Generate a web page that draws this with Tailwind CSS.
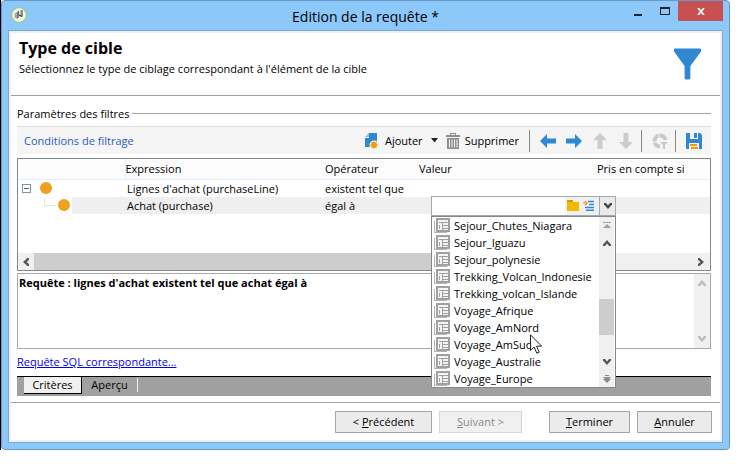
<!DOCTYPE html>
<html lang="fr">
<head>
<meta charset="utf-8">
<title>Edition de la requête</title>
<script src="https://cdn.jsdelivr.net/npm/@tailwindcss/browser@4"></script>
</head>
<body class="bg-white font-['Open_Sans','Noto_Sans',sans-serif] text-[11px] leading-[17px] text-black">
<svg class="hidden">
  <symbol id="doc" viewBox="0 0 16 16"><path d="M0 4h1v11h12v1H0z" fill="#b4b4b4"/><rect x="3" y="2" width="12" height="12" fill="#f4f4f4" stroke="#a0a0a0" stroke-width="2"/><path d="M5 5.500h9M5.500 8v4M8.500 5v8M9 8.500h5M9 11.500h5" stroke="#a0a0a0" fill="none"/></symbol>
  <symbol id="chev" viewBox="0 0 8 6"><path d="M0 0h2l2 2.500L6 0h2v1.500L4 6 0 1.500z" fill="currentColor"/></symbol>
  <symbol id="arrow" viewBox="0 0 16 16"><path d="M0 8 7 1v4.500h9v5H7V15z" fill="currentColor"/></symbol>
</svg>
<div class="h-screen pr-[13px] pb-[17px]">
<div class="relative flex h-full border-l border-black">
<div class="flex min-w-0 flex-1 flex-col rounded-[4px] border border-[#6698c8] bg-[#8dc8fb] px-[6px] pb-[6px]">
  <header class="relative flex h-[29px] shrink-0 items-center justify-center">
    <svg class="absolute left-[3px] top-[6px] size-4" viewBox="0 0 16 16"><circle cx="8" cy="8" r="7.400" fill="#f2f4ef" stroke="#9bc754"/><path d="M3.500 6.500 6 5v7L3.500 10.800z" fill="#aaa"/><path d="m6 5 2-1.500V10l-2 2z" fill="#777"/><path d="M8.500 4.500 10 3v6l-1.500 1z" fill="#bbb"/><path d="M11 3v6.500L8 8" stroke="#222" fill="none"/></svg>
    <h1 class="pt-[2px] text-[14px]">Edition de la requête *</h1>
    <div class="absolute right-0 top-0 flex h-5">
      <button aria-label="Réduire" class="flex w-[27px] items-center justify-center"><span class="mt-[7px] h-[2px] w-2 bg-[#222]"></span></button>
      <button aria-label="Agrandir" class="flex w-[27px] items-center justify-center"><span class="h-2 w-[10px] border border-t-2 border-[#222]"></span></button>
      <button aria-label="Fermer" class="flex w-[45px] items-center justify-center bg-[#c75050]"><svg class="h-[7px] w-2" viewBox="0 0 8 7"><path d="m1 0 6 7M7 0 1 7" stroke="#fff" stroke-width="1.800"/></svg></button>
    </div>
  </header>
  <div class="flex min-h-0 flex-1 flex-col border border-[#7aa9d8] bg-white">
  <div class="flex min-h-0 flex-1 flex-col border-2 border-[#f0f0f0]">
    <section class="flex h-[63px] shrink-0 items-start justify-between border-b border-[#a0a0a0] pl-2 pr-[19px]">
      <div>
        <h2 class="pt-[5px] text-[16px] font-bold leading-[20px]">Type de cible</h2>
        <p class="pt-[2px]">Sélectionnez le type de ciblage correspondant à l'élément de la cible</p>
      </div>
      <svg class="mt-[15px] h-8 w-[27px]" viewBox="0 0 28 32"><path d="M1 0h26q1 0 1 1v2L17 18v13l-1 1h-4l-1-1V18L0 3V1q0-1 1-1z" fill="#3087d2"/></svg>
    </section>
    <main class="flex min-h-0 flex-1 flex-col pl-[6px] pr-[9px]">
      <h3 class="flex items-center gap-[2px] pt-[9px]">Paramètres des filtres<span class="h-px flex-1 bg-[#a0a0a0]"></span></h3>
      <div class="mt-1 flex h-7 shrink-0 items-center border-t border-[#ddd] bg-[#f5f5f5] pl-[7px] pr-[9px]">
        <span class="flex-1 text-[#2a5bc0]">Conditions de filtrage</span>
        <button class="flex items-center gap-[6px]"><svg class="h-4 w-[14px]" viewBox="0 0 14 16"><path d="M4 0h8v8l-3 6H0V5h4z" fill="#3087d2"/><path d="M0 4 4 0v4z" fill="#8abaf0"/><circle cx="9" cy="12" r="4.500" fill="#f5f5f5"/><path d="M9 7.500v9M4.500 12h9M6 9l6 6M12 9l-6 6" stroke="#f0a020" stroke-width=".8"/><circle cx="9" cy="12" r="2.900" fill="#f09a10"/></svg>Ajouter</button>
        <button aria-label="Options d'ajout" class="px-2"><svg class="h-[5px] w-[7px]" viewBox="0 0 7 5"><path d="M0 0h7L3.500 4.500z" fill="#222"/></svg></button>
        <button class="flex items-center gap-[5px]"><svg class="h-4 w-[14px]" viewBox="0 0 14 16"><path d="M0 2h4V0h6v2h4v2H0zM1 5h12v11H1z" fill="#8e8e8e"/><path d="M5 1.500h4M3.500 6.500v8M6 6.500v8M8.500 6.500v8M11 6.500v8" stroke="#f5f5f5"/></svg>Supprimer</button>
        <span class="ml-[10px] mr-[10px] h-[22px] w-px bg-[#888]"></span>
        <div class="flex items-center gap-[10px]">
          <button aria-label="Gauche" class="text-[#3087d2]"><svg class="size-4"><use href="#arrow"/></svg></button>
          <button aria-label="Droite" class="text-[#3087d2]"><svg class="size-4 rotate-180"><use href="#arrow"/></svg></button>
          <button aria-label="Monter" class="text-[#ccc]" disabled><svg class="size-4 rotate-90"><use href="#arrow"/></svg></button>
          <button aria-label="Descendre" class="text-[#ccc]" disabled><svg class="size-4 -rotate-90"><use href="#arrow"/></svg></button>
        </div>
        <span class="ml-[7px] mr-[10px] h-[22px] w-px bg-[#888]"></span>
        <button aria-label="Actualiser" disabled><svg class="size-4" viewBox="0 0 16 16"><path d="M13.500 7A5.500 5.500 0 1 0 8 13.500" stroke="#c8c8c8" stroke-width="4" fill="none"/><path d="M7 0v5M0 9h5" stroke="#f5f5f5"/><path d="M8 9h8l-3 3v4h-2v-4z" fill="#c8c8c8"/></svg></button>
        <span class="ml-[7px] mr-[10px] h-[22px] w-px bg-[#888]"></span>
        <button aria-label="Enregistrer"><svg class="size-4" viewBox="0 0 16 16"><path d="M0 0h14l2 2v14H0z" fill="#3087d2"/><path d="M4 0h8v6H4zM3 10h10v6H3z" fill="#f5f5f5"/><path d="M8 0h3v5H8z" fill="#3087d2"/><path d="M4 11h7v2H4zM5 14h7v2H5z" fill="#f09a10"/></svg></button>
      </div>
      <div class="mt-1 flex h-[113px] shrink-0 flex-col border border-[#828790]">
        <table class="w-full table-fixed border-collapse text-left">
          <colgroup><col class="w-[107px]"><col class="w-[200px]"><col class="w-[94px]"><col class="w-[178px]"><col></colgroup>
          <thead><tr class="h-[20px] border-b border-[#e3eefa] bg-[#fcfcfc] *:p-0 *:font-normal"><th aria-label="Arborescence" class="border-r border-[#e3eefa]"></th><th>Expression</th><th>Opérateur</th><th>Valeur</th><th>Pris en compte si</th></tr></thead>
          <tbody>
            <tr class="h-[17px] *:p-0">
              <td><div class="flex items-center gap-[9px] pl-1"><button aria-label="Replier" class="flex size-[9px] items-center justify-center border border-[#919191]"><span class="h-px w-[5px] bg-[#3a5a9a]"></span></button><span class="size-3 rounded-full bg-[#f0a020]"></span></div></td>
              <td><span class="pl-[2px]">Lignes d'achat (purchaseLine)</span></td><td>existent tel que</td><td></td><td></td>
            </tr>
            <tr class="h-[17px] *:bg-[#efefef] *:p-0">
              <td><div class="flex h-[17px] items-center bg-white pl-[26px]"><span class="mb-[8px] h-[9px] w-3 border-b border-l border-[#e4e4e4]"></span><span class="ml-[2px] size-3 rounded-full bg-[#f0a020]"></span><span class="ml-[2px] h-full flex-1 bg-[#efefef]"></span></div></td>
              <td><span class="pl-[2px]">Achat (purchase)</span></td><td>égal à</td>
              <td class="relative">
                <div class="absolute left-[12px] top-[-1px] z-10 w-[185px]">
                  <div class="flex h-5 border border-[#a5a8ad] bg-white">
                    <input aria-label="Valeur" class="min-w-0 flex-1 px-1 outline-none">
                    <button aria-label="Ouvrir" class="flex w-[16px] items-center justify-center bg-[#f0f0f0]"><svg class="h-[11px] w-3" viewBox="0 0 12 11"><path d="M0 0h5l1 2h6v9H0z" fill="#f0b800"/><path d="M0 0h6v2H0z" fill="#ec9000"/></svg></button>
                    <button aria-label="Editer l'expression" class="flex w-[18px] items-center pl-[2px] bg-[#f0f0f0]"><svg class="h-[11px] w-[11px]" viewBox="0 0 11 11"><path d="M5 1.500h6M6 4.500h5M2 7.500h9M3 10.200h8" stroke="#3087d2" stroke-width="1.500"/><path d="M0 3h4M2 1l2 2-2 2" stroke="#f09a10" stroke-width="1.200" fill="none"/></svg></button>
                    <button aria-label="Afficher la liste" class="flex w-4 items-center justify-center border-l border-[#a5a8ad] bg-[#eaeaea] text-[#444]"><svg class="h-[6px] w-2"><use href="#chev"/></svg></button>
                  </div>
                  <div class="flex border border-[#828790] bg-white">
                    <ul role="listbox" aria-label="Valeurs" class="min-w-0 flex-1 whitespace-nowrap *:flex *:h-[17px] *:items-center *:gap-1 *:pl-[2px]">
                      <li role="option"><svg class="size-4 shrink-0"><use href="#doc"/></svg>Sejour_Chutes_Niagara</li>
                      <li role="option"><svg class="size-4 shrink-0"><use href="#doc"/></svg>Sejour_Iguazu</li>
                      <li role="option"><svg class="size-4 shrink-0"><use href="#doc"/></svg>Sejour_polynesie</li>
                      <li role="option"><svg class="size-4 shrink-0"><use href="#doc"/></svg>Trekking_Volcan_Indonesie</li>
                      <li role="option"><svg class="size-4 shrink-0"><use href="#doc"/></svg>Trekking_volcan_Islande</li>
                      <li role="option"><svg class="size-4 shrink-0"><use href="#doc"/></svg>Voyage_Afrique</li>
                      <li role="option"><svg class="size-4 shrink-0"><use href="#doc"/></svg>Voyage_AmNord</li>
                      <li role="option"><svg class="size-4 shrink-0"><use href="#doc"/></svg>Voyage_AmSud</li>
                      <li role="option"><svg class="size-4 shrink-0"><use href="#doc"/></svg>Voyage_Australie</li>
                      <li role="option"><svg class="size-4 shrink-0"><use href="#doc"/></svg>Voyage_Europe</li>
                    </ul>
                    <div class="mr-px flex w-[15px] flex-col items-center bg-[#f0f0f0] text-[#555]">
                      <svg class="mt-[5px] h-[7px] w-2 text-[#a0a0a0]" viewBox="0 0 8 7"><path d="M0 0h8v1H0zM4 2l4 4H0z" fill="currentColor"/></svg>
                      <svg class="mt-[11px] h-[6px] w-2 rotate-180"><use href="#chev"/></svg>
                      <span class="mt-[53px] h-9 w-full bg-[#cdcdcd]"></span>
                      <svg class="mt-[24px] h-[6px] w-2"><use href="#chev"/></svg>
                      <svg class="mt-[10px] h-[8px] w-2 text-[#8a8a8a]" viewBox="0 0 8 8"><path d="M2 0h4v1H2zM0 2h8L6 4h2L4 8 0 4h2z" fill="currentColor"/></svg>
                    </div>
                  </div>
                  <svg class="absolute left-[99px] top-[138px] h-[20px] w-3" viewBox="0 0 12 20"><path d="M.5 .8v15.700l3.600-3.500 2.700 6.200 2.400-1-2.600-6h5z" fill="#fff" stroke="#222"/></svg>
                </div>
              </td>
              <td></td>
            </tr>
          </tbody>
        </table>
        <div class="mt-auto flex h-[17px] items-center bg-[#f0f0f0] text-[#555]">
          <svg class="mx-1 h-[6px] w-2 rotate-90"><use href="#chev"/></svg>
          <span class="h-full w-3/4 bg-[#cdcdcd]"></span>
          <svg class="ml-auto mr-[5px] h-[6px] w-2 -rotate-90"><use href="#chev"/></svg>
        </div>
      </div>
      <div class="mt-[2px] flex min-h-0 flex-1 border border-[#a8a8ac]">
        <textarea aria-label="Requête" readonly class="min-w-0 flex-1 resize-none overflow-hidden pl-px font-bold outline-none">Requête : lignes d'achat existent tel que achat égal à</textarea>
        <div class="flex w-4 flex-col items-center justify-between bg-[#f0f0f0] py-[6px] text-[#bbb]"><svg class="h-[6px] w-2 rotate-180"><use href="#chev"/></svg><svg class="h-[6px] w-2"><use href="#chev"/></svg></div>
      </div>
      <div class="pt-1"><a href="#" class="text-[#0000f0] underline">Requête SQL correspondante...</a></div>
      <nav class="mt-[6px] mb-[6px] flex h-5 shrink-0 items-start border-t border-black bg-[#a0a0a0] pl-[7px]">
        <button class="h-[17px] w-[58px] border-b border-r border-black bg-[#f0f0f0] leading-[14px]">Critères</button>
        <button class="mt-px h-[14px] w-[56px] border-r border-[#f0f0f0] leading-[14px]">Aperçu</button>
      </nav>
    </main>
    <footer class="flex h-[38px] shrink-0 items-start justify-end gap-[7px] border-t border-[#a0a0a0] pr-2 pt-2 *:h-[22px] *:border *:leading-[20px]">
      <button class="w-[97px] border-[#a5a5a5] bg-[#ebebeb]">&lt; <u>P</u>récédent</button>
      <button disabled class="w-[83px] border-[#d5d5d5] bg-[#f0f0f0] text-[#8a8a8a]"><u>S</u>uivant &gt;</button>
      <button class="ml-5 w-[81px] border-[#a5a5a5] bg-[#ebebeb]"><u>T</u>erminer</button>
      <button class="w-[75px] border-[#a5a5a5] bg-[#ebebeb]"><u>A</u>nnuler</button>
    </footer>
  </div>
  </div>
</div>
</div>
</div>
</body>
</html>
